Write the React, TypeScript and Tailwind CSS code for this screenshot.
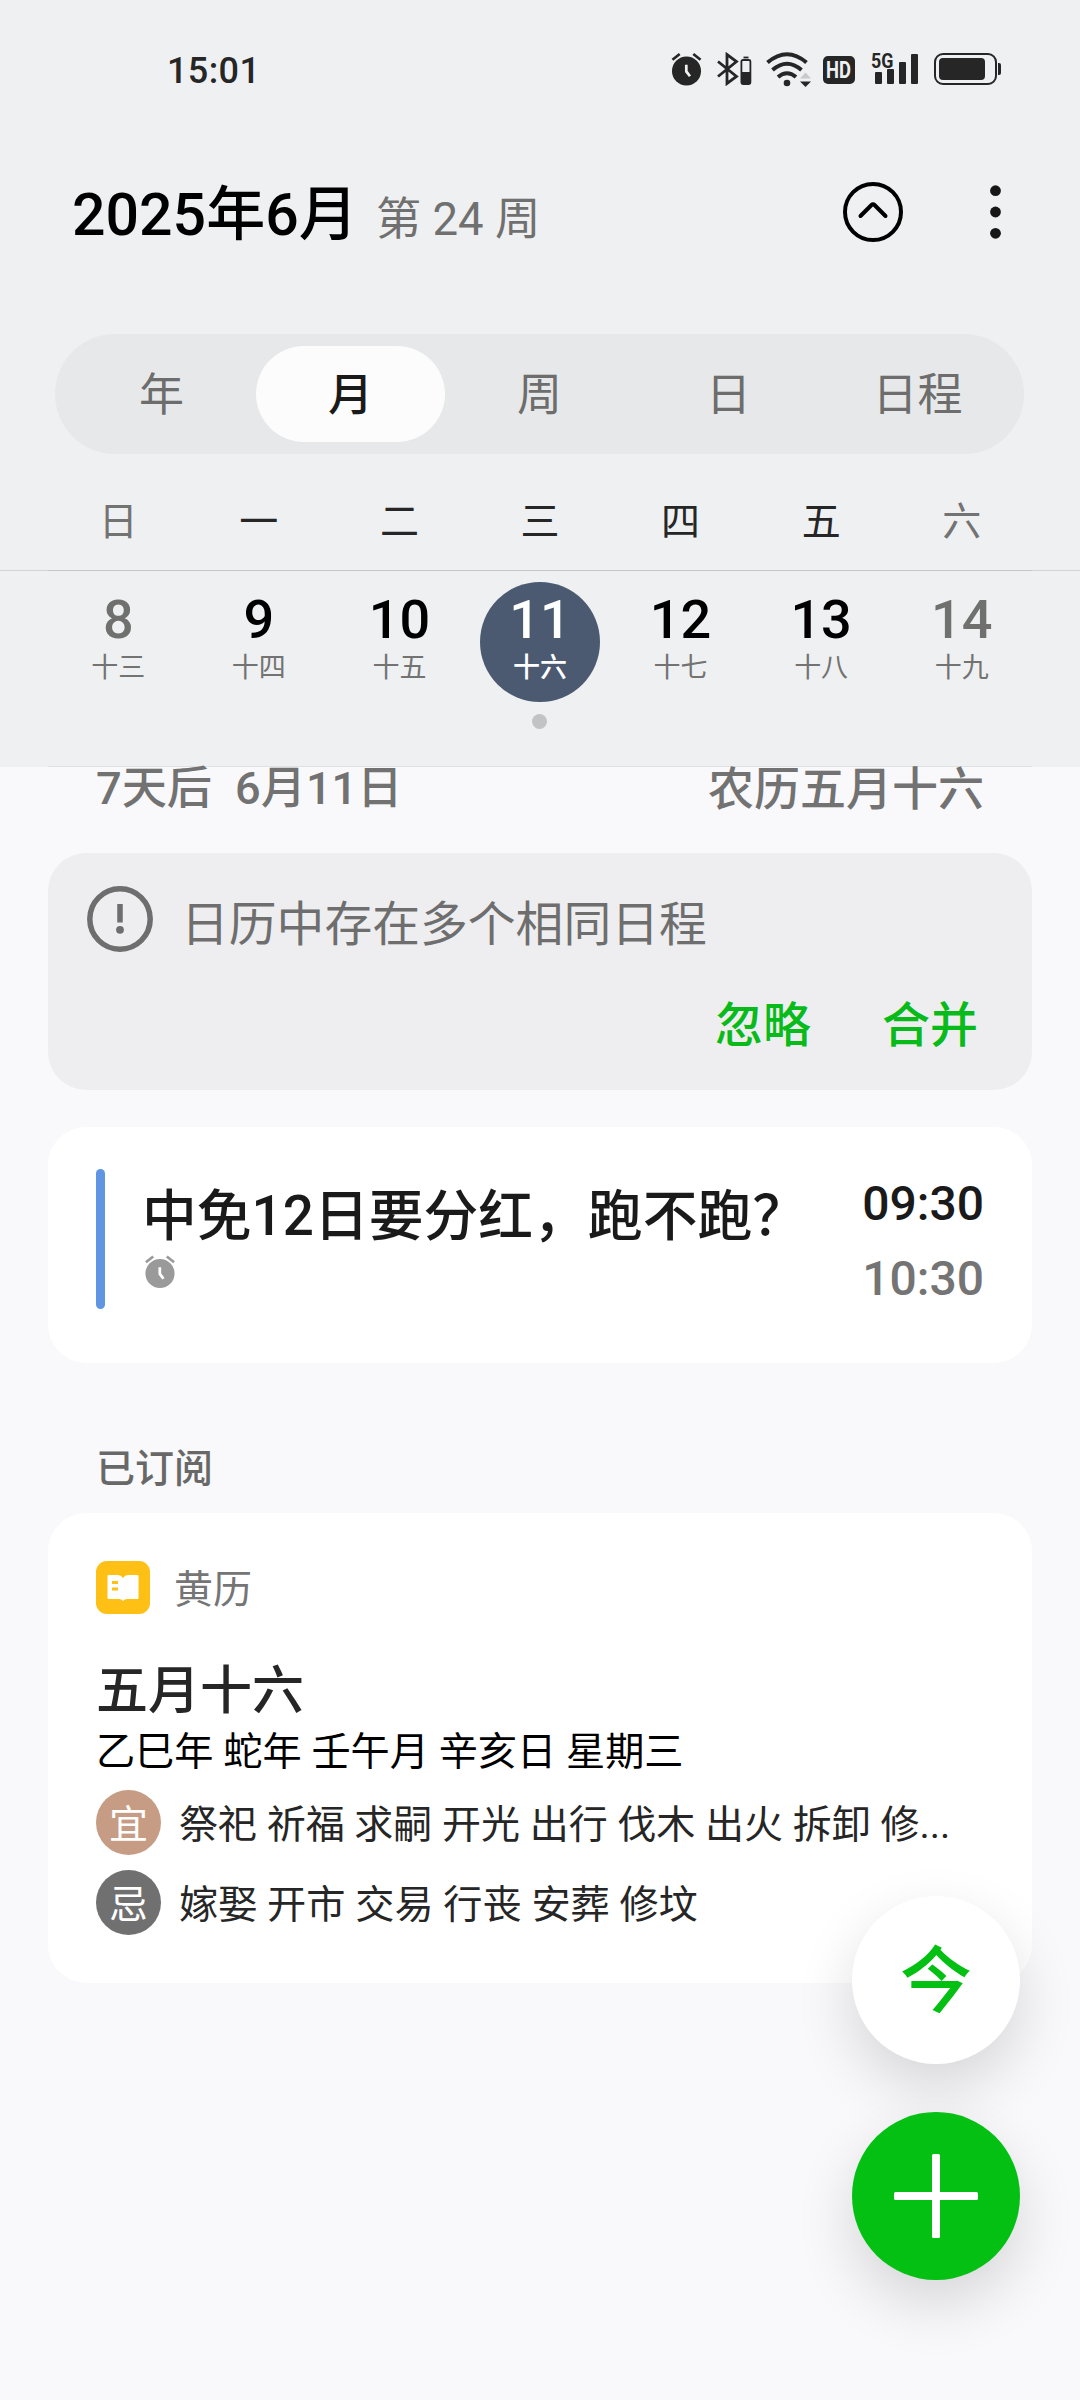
import React, { useState } from 'react';

const tabs = ['年', '月', '周', '日', '日程'];

const weekdays = ['日', '一', '二', '三', '四', '五', '六'];

const days = [
  { day: 8, lunar: '十三', weekend: true },
  { day: 9, lunar: '十四' },
  { day: 10, lunar: '十五' },
  { day: 11, lunar: '十六', hasEvent: true },
  { day: 12, lunar: '十七' },
  { day: 13, lunar: '十八' },
  { day: 14, lunar: '十九', weekend: true }
];

const AlarmIcon = ({ className, hand }: { className: string; hand: string }) => (
  <svg className={className} viewBox="0 0 32 34" fill="none">
    <circle cx="16" cy="19" r="15" fill="currentColor" />
    <path d="M1.5 7.5 9 1.5M30.5 7.5 23 1.5" stroke="currentColor" strokeWidth="2.8" />
    <path d="M15.8 12.500v7l3.800 5" stroke={hand} strokeWidth="2.8" />
  </svg>
);

const StatusBar = () => (
  <div className="flex h-[138px] items-center justify-between pl-[167px] pr-[79px] text-[#262626]">
    <span className="pt-[3px] text-[36px] font-medium leading-none tracking-[0.4px]">15:01</span>
    <div className="flex items-center">
      <AlarmIcon className="h-[34px] w-[31px]" hand="#eff0f2" />
      <svg className="ml-[15px] h-[34px] w-[35px]" viewBox="0 0 35 34" fill="none">
        <path d="M1 9.5 19.5 24.5 10 31.5V2.5L19.5 9.5 1 24.5" stroke="currentColor" strokeWidth="2.8" />
        <path d="M26.5 5.5h5" stroke="currentColor" strokeWidth="1.8" />
        <rect x="24.4" y="8" width="9" height="24" rx="1.5" stroke="currentColor" strokeWidth="1.8" />
        <path d="M24 20h10v12H24z" fill="currentColor" />
      </svg>
      <svg className="ml-[14px] h-[36px] w-[46px]" viewBox="0 0 46 36" fill="none">
        <path d="M1.500 11.500Q21 -5 40.500 11.500M6.500 19Q21 6.500 35.500 19M12 26Q21 18.500 30 26" stroke="currentColor" strokeWidth="4" />
        <circle cx="21" cy="32" r="3.3" fill="currentColor" />
        <path d="M34 27.500 39.500 21.500 45 27.500z" fill="#c9cacc" />
        <path d="M34 30.500h11L39.500 36z" fill="currentColor" />
      </svg>
      <span className="ml-[11px] mt-[2px] flex h-[28px] w-[32px] items-center justify-center rounded-[5px] bg-[#262626] text-[#eff0f2]">
        <span className="scale-x-[0.8] text-[23px] font-bold leading-none">HD</span>
      </span>
      <div className="relative ml-[20px] flex h-[30px] w-[43px] items-end gap-[5px]">
        <span className="absolute -left-[4px] -top-[3px] origin-left scale-x-[0.85] text-[21px] font-bold leading-none">5G</span>
        <span className="h-[12px] w-[7px] rounded-[1px] bg-[#262626]" />
        <span className="h-[15px] w-[7px] rounded-[1px] bg-[#262626]" />
        <span className="h-[22px] w-[7px] rounded-[1px] bg-[#262626]" />
        <span className="h-[30px] w-[7px] rounded-[1px] bg-[#262626]" />
      </div>
      <div className="ml-[16px] flex h-[32px] w-[63px] items-center rounded-[9px] border-2 border-[#262626] pl-[3px]">
        <span className="h-[22px] w-[46px] rounded-[4px] bg-[#262626]" />
      </div>
      <span className="ml-px h-[12px] w-[3px] rounded-r-[2px] bg-[#262626]" />
    </div>
  </div>
);

const TitleBar = () => (
  <div className="flex h-[148px] items-center justify-between pl-[72px] pr-[79px]">
    <h1 className="flex items-baseline pt-[5px] text-[59px] font-medium leading-none text-black">
      2025年6月
      <span className="ml-[18px] text-[45.5px] font-normal text-[#6f706f]">第 24 周</span>
    </h1>
    <div className="flex items-center gap-[87px]">
      <svg className="h-[60px] w-[60px]" viewBox="0 0 60 60" fill="none" stroke="#000">
        <circle cx="30" cy="30" r="28" strokeWidth="4" />
        <path d="M17.500 34 28.500 23Q30 21.500 31.500 23L42.500 34" strokeWidth="4" strokeLinecap="round" />
      </svg>
      <svg className="h-[54px] w-[11px]" viewBox="0 0 11 54" fill="#171717">
        <circle cx="5.5" cy="5.7" r="5.4" />
        <circle cx="5.5" cy="27" r="5.4" />
        <circle cx="5.5" cy="48.3" r="5.4" />
      </svg>
    </div>
  </div>
);

const App = () => {
  const [activeTab, setActiveTab] = useState('月');
  const [selectedDay, setSelectedDay] = useState(11);

  return (
    <div className="relative min-h-[2400px] w-[1080px] overflow-hidden bg-[#f9f9fb] font-[Roboto,'Noto_Sans_CJK_SC',sans-serif]">
      <header className="h-[767px] bg-[#eff0f2]">
        <StatusBar />
        <TitleBar />

        {/* View switcher */}
        <div className="ml-[55px] mt-[48px] grid h-[120px] w-[969px] grid-cols-5 rounded-full bg-[#e7e8e9] p-3">
          {tabs.map((tab) => (
            <button
              key={tab}
              onClick={() => setActiveTab(tab)}
              className={`rounded-full pt-[3px] text-[45px] leading-none ${
                activeTab === tab ? 'bg-[#fcfcfc] font-medium text-[#1a1a1a]' : 'text-[#6c6d6c]'
              }`}
            >
              {tab}
            </button>
          ))}
        </div>

        {/* Week strip */}
        <div className="grid h-[116px] grid-cols-7 px-[48px] pt-[48px] text-center text-[39px] leading-[40px]">
          {weekdays.map((name, i) => (
            <span key={name} className={i === 0 || i === 6 ? 'text-[#737373]' : 'text-[#262626]'}>
              {name}
            </span>
          ))}
        </div>
        <div className="h-px bg-[#d3d4d6] px-12">
          <div className="h-px bg-[#c4c6c8]" />
        </div>
        <div className="grid grid-cols-7 px-[48px] pt-[11px]">
          {days.map(({ day, lunar, weekend, hasEvent }) => {
            const selected = day === selectedDay;
            return (
              <button key={day} onClick={() => setSelectedDay(day)} className="flex h-[184px] flex-col items-center">
                <span
                  className={`flex h-[120px] w-[120px] flex-col items-center rounded-full pt-[11px] ${
                    selected ? 'bg-[#4b5a70] text-white' : weekend ? 'text-[#70716f]' : 'text-black'
                  }`}
                >
                  <span className="text-[54px] font-medium leading-[54px]">{day}</span>
                  <span className={`mt-[7px] text-[27px] leading-[28px] ${selected ? 'font-medium' : 'text-[#727372]'}`}>
                    {lunar}
                  </span>
                </span>
                {hasEvent && <span className="mt-[12px] h-[15px] w-[15px] rounded-full bg-[#c2c3c5]" />}
              </button>
            );
          })}
        </div>
        <div className="mx-12 h-px bg-[#e0e1e3]" />
      </header>

      <main className="px-12">
        <div className="flex h-[86px] justify-between pl-[48px] pr-[48px] text-[46px] font-medium leading-[44px] text-[#727272]">
          <div className="flex gap-[23px] text-[45.2px]">
            <span>7天后</span>
            <span>6月11日</span>
          </div>
          <span>农历五月十六</span>
        </div>

        {/* Duplicate events notice */}
        <section className="h-[237px] rounded-[38px] bg-[#eeeef0] pt-[33px]">
          <div className="flex pl-[39px] text-[#6e6e6e]">
            <svg className="h-[66px] w-[66px]" viewBox="0 0 66 66" fill="none">
              <circle cx="33" cy="33" r="30.2" stroke="currentColor" strokeWidth="5.5" />
              <path d="M33 18v18.500" stroke="currentColor" strokeWidth="5.5" />
              <circle cx="33" cy="43.8" r="3.9" fill="currentColor" />
            </svg>
            <p className="ml-[28px] mt-[15px] text-[47.8px] leading-[48px]">日历中存在多个相同日程</p>
          </div>
          <div className="mt-[50px] flex justify-end gap-[71px] pr-[54px] text-[48px] font-medium leading-[48px] text-[#08ba1a]">
            <button>忽略</button>
            <button>合并</button>
          </div>
        </section>

        {/* Event */}
        <section className="mt-[37px] flex h-[236px] rounded-[38px] bg-white px-12 pt-[42px]">
          <span className="h-[140px] w-[9px] rounded-full bg-[#5f95e3]" />
          <div className="ml-[37px] pt-[20px]">
            <h2 className="text-[54.8px] font-medium leading-[54px] text-[#1a1a1a]">中免12日要分红，跑不跑？</h2>
            <AlarmIcon className="ml-[2px] mt-[12px] h-[33px] w-[32px] text-[#9a9a9a]" hand="#fff" />
          </div>
          <div className="ml-auto pt-[11px] text-right text-[48px] font-medium">
            <p className="leading-[48px] text-[#1a1a1a]">09:30</p>
            <p className="mt-[27px] leading-[48px] text-[#747474]">10:30</p>
          </div>
        </section>

        <h3 className="ml-[48px] mt-[86px] text-[39px] font-medium leading-[40px] text-[#686868]">已订阅</h3>

        {/* Almanac */}
        <section className="mt-[24px] h-[470px] rounded-[38px] bg-white px-12 pt-[48px]">
          <div className="flex items-center">
            <svg className="h-[53px] w-[54px]" viewBox="0 0 54 53">
              <rect width="54" height="53" rx="11" fill="#fec015" />
              <path d="M12.500 14h9.500q3 0 5 3 2-3 5-3h9.500q1 0 1 1v22q0 1-1 1h-10.500q-2.500 0-4 2-1.500-2-4-2H12.500q-1 0-1-1V15q0-1 1-1z" fill="#fff" />
              <path d="M16 21.500h6M16 28h6" stroke="#fec015" strokeWidth="3" />
            </svg>
            <span className="ml-[24px] pt-[4px] text-[39px] leading-[40px] text-[#757575]">黄历</span>
          </div>
          <h2 className="mt-[51px] text-[52px] font-medium leading-[54px] text-[#262626]">五月十六</h2>
          <p className="mt-[13px] text-[39.2px] leading-[40px] text-black">乙巳年 蛇年 壬午月 辛亥日 星期三</p>
          <div className="mt-[18px] flex items-center text-[39px] leading-[40px] text-[#262626]">
            <span className="flex h-[65px] w-[65px] items-center justify-center rounded-full bg-[#c79c84] pt-[4px] text-white">宜</span>
            <span className="ml-[18px] pt-[4px]">祭祀 祈福 求嗣 开光 出行 伐木 出火 拆卸 修...</span>
          </div>
          <div className="mt-[15px] flex items-center text-[39px] leading-[40px] text-[#262626]">
            <span className="flex h-[65px] w-[65px] items-center justify-center rounded-full bg-[#707070] pt-[4px] text-white">忌</span>
            <span className="ml-[18px] pt-[4px] text-[39.2px]">嫁娶 开市 交易 行丧 安葬 修坟</span>
          </div>
        </section>
      </main>

      {/* Floating buttons */}
      <div className="absolute right-[60px] top-[1896px] flex flex-col gap-12">
        <button className="flex h-[168px] w-[168px] items-center justify-center rounded-full bg-white pt-[4px] text-[72px] font-medium leading-none text-[#03c013] shadow-[0_24px_60px_rgba(0,0,0,0.14)]">
          今
        </button>
        <button className="flex h-[168px] w-[168px] items-center justify-center rounded-full bg-[#03c013] shadow-[0_24px_60px_rgba(0,0,0,0.14)]">
          <svg className="h-[84px] w-[84px]" viewBox="0 0 84 84" fill="#fff">
            <rect x="38" width="8" height="84" rx="1.5" />
            <rect y="38" width="84" height="8" rx="1.5" />
          </svg>
        </button>
      </div>
    </div>
  );
};

export default App;
